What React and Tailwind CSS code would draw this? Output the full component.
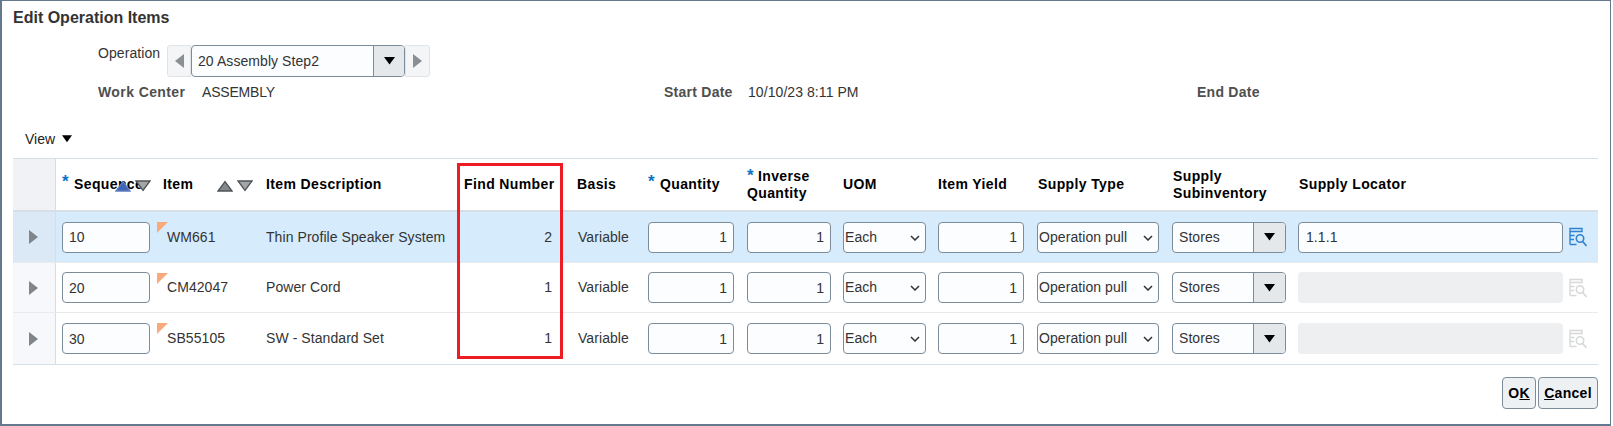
import React from "react";

const COLS = "grid grid-cols-[43px_101px_102px_199px_113px_70px_99px_96px_95px_99px_136px_125px_303px]";

function Star({ className = "" }) {
  return <span className={"text-[#0b72c4] font-bold text-[17px] leading-none " + className}>*</span>;
}

function Tri({ dir = "down", className = "", color = "#000000" }) {
  const side = dir === "left" || dir === "right";
  const pts = { down: "0,0 11,0 5.5,7.5", up: "0,7.5 11,7.5 5.5,0", left: "9,0 9,14 0,7", right: "0,0 9,7 0,14" }[dir];
  const w = side ? 9 : 11;
  const h = side ? 14 : 8;
  return (
    <svg width={w} height={h} viewBox={`0 0 ${w} ${h}`} className={"block " + className}>
      <polygon points={pts} fill={color} />
    </svg>
  );
}

function Sort({ up = "#85888b", upStroke = "#505356", className = "" }) {
  return (
    <div className={"flex gap-[4px] " + className}>
      <svg width="16" height="12" viewBox="0 0 16 12"><polygon points="1,11 15,11 8,1.5" fill={up} stroke={upStroke} strokeWidth="1.3" /></svg>
      <svg width="16" height="12" viewBox="0 0 16 12"><polygon points="1,1 15,1 8,10.5" fill="#a3a6a9" stroke="#505356" strokeWidth="1.3" /></svg>
    </div>
  );
}

function Lookup({ disabled }) {
  const c = disabled ? "#d6d8d9" : "#2f82cf";
  return (
    <svg width="18" height="20" viewBox="0 0 18 20" fill="none" stroke={c} strokeWidth="1.4">
      <path d="M1 1.5H13V4.5H1ZM1 4.5V17.5M1 8.5H5.5M1 12.5H5M1 17.5H7.5" />
      <circle cx="11" cy="11.5" r="3.7" strokeWidth="1.6" />
      <path d="M13.7 14.5L17.5 19" strokeWidth="1.6" />
    </svg>
  );
}

const inputCls = "h-[31px] bg-[#fbfdff] border border-[#7d8c99] rounded-[4px] text-[14px] tracking-[0.07px] text-[#333333] outline-none";

function NumInput({ value, w }) {
  return <input readOnly defaultValue={value} className={inputCls + " text-right pr-[6px] " + w} />;
}

function Combo({ value }) {
  return (
    <div className="flex w-[114px] h-[31px] bg-[#fbfdff] border border-[#7d8c99] rounded-[4px] overflow-hidden">
      <div className="flex-1 pl-[6px] flex items-center text-[14px] text-[#333333]">{value}</div>
      <div className="w-[32px] border-l border-[#7d8c99] bg-[#e4e8ea] flex items-center justify-center"><Tri dir="down" /></div>
    </div>
  );
}

function Sel({ value, w }) {
  return (
    <div className={"relative " + w}>
      <select defaultValue={value} className="block w-full h-[31px] appearance-none pl-[1px] pr-[20px] bg-[#fbfdff] border border-[#7d8c99] rounded-[4px] text-[14px] text-[#333333] outline-none">
        <option>{value}</option>
      </select>
      <svg width="10" height="6" viewBox="0 0 10 6" fill="none" stroke="#333333" strokeWidth="1.5" className="absolute right-[6px] top-[13px] pointer-events-none">
        <path d="M1 1L5 5L9 1" />
      </svg>
    </div>
  );
}

function Row({ seq, item, desc, find, locator, selected, h, last }) {
  const bg = selected ? "bg-[#d6ebfc]" : "bg-white";
  return (
    <div className={`${COLS} ${h} items-center text-[14px] tracking-[0.07px] text-[#333333] ${bg} ${last ? "" : "border-b border-[#e8ebee]"}`}>
      <div className={`h-full flex items-center justify-center border-r border-[#d6dfe6] pr-[1px] ${selected ? "bg-[#dbe8f5]" : "bg-[#f6f8fb]"}`}>
        <Tri dir="right" color="#7f8589" />
      </div>
      <div className="pl-[6px]"><input readOnly defaultValue={seq} className={inputCls + " w-[88px] pl-[6px]"} /></div>
      <div className="relative h-full flex items-center pl-[10px]">
        <svg width="11" height="11" viewBox="0 0 11 11" className="absolute left-0 top-[10px]"><polygon points="0,0 11,0 0,11" fill="#f9a97b" /></svg>
        {item}
      </div>
      <div className="pl-[7px] whitespace-nowrap">{desc}</div>
      <div className="text-right pr-[19px]">{find}</div>
      <div className="pl-[7px]">Variable</div>
      <div className="pl-[7px]"><NumInput value="1" w="w-[86px]" /></div>
      <div className="pl-[7px]"><NumInput value="1" w="w-[84px]" /></div>
      <div className="pl-[7px]"><Sel value="Each" w="w-[83px]" /></div>
      <div className="pl-[7px]"><NumInput value="1" w="w-[86px]" /></div>
      <div className="pl-[7px]"><Sel value="Operation pull" w="w-[122px]" /></div>
      <div className="pl-[6px]"><Combo value="Stores" /></div>
      <div className="pl-[7px] flex items-center gap-[6px]">
        {locator ? (
          <input readOnly defaultValue={locator} className={inputCls + " w-[265px] pl-[7px]"} />
        ) : (
          <div className="w-[265px] h-[31px] bg-[#eeeff0] rounded-[4px]" />
        )}
        <Lookup disabled={!locator} />
      </div>
    </div>
  );
}

export default function App() {
  return (
    <div className="w-[1611px] h-[426px] bg-white border-t border-l-2 border-r border-b-2 border-[#64798d] font-['Liberation_Sans',Arial,sans-serif] overflow-hidden">
      <div className="h-[32px] pl-[11px] pt-[1px] flex items-center text-[16px] font-bold text-[#333333]">Edit Operation Items</div>

      <div className="mt-[12px] h-[32px] pl-[96px] flex text-[14px] tracking-[0.07px] text-[#333333]">
        <div className="w-[69px] -mt-[2px]">Operation</div>
        <div className="w-[24px] bg-[#f3f5f7] border border-[#e0e4e8] rounded-l-[3px] flex items-center justify-center"><Tri dir="left" color="#8a8f93" /></div>
        <div className="w-[214px] bg-[#fbfdff] border border-[#7d8c99] rounded-[4px] flex overflow-hidden">
          <div className="flex-1 flex items-center pl-[6px] text-[14px]">20 Assembly Step2</div>
          <div className="w-[31px] bg-[#e4e8ea] border-l border-[#7d8c99] flex items-center justify-center"><Tri dir="down" /></div>
        </div>
        <div className="w-[25px] bg-[#f3f5f7] border border-[#e0e4e8] rounded-r-[3px] flex items-center justify-center"><Tri dir="right" color="#8a8f93" /></div>
      </div>

      <div className="mt-[3px] h-[24px] pl-[96px] grid grid-cols-[566px_533px_200px] items-center text-[14px] text-[#333333]">
        <div className="flex"><span className="w-[104px] font-bold tracking-[0.4px] text-[#4f4f4f]">Work Center</span><span className="tracking-[-0.2px]">ASSEMBLY</span></div>
        <div className="flex"><span className="w-[84px] font-bold tracking-[0.25px] text-[#4f4f4f]">Start Date</span><span className="tracking-[0.07px]">10/10/23 8:11 PM</span></div>
        <div className="font-bold tracking-[0.25px] text-[#4f4f4f]">End Date</div>
      </div>

      <div className="mt-[25px] h-[20px] pl-[23px] flex items-center gap-[7px] text-[14px] text-[#222222]">
        <span>View</span><Tri dir="down" className="w-[10px]" />
      </div>

      <div className="mt-[9px] ml-[11px] w-[1585px] border-t border-b border-[#d6dfe6] relative">
        <div className={`${COLS} h-[53px] items-center text-[14px] tracking-[0.38px] font-bold text-black leading-[17px] border-b-2 border-[#d6dfe6]`}>
          <div className="h-full bg-[#f0f2f6] border-r border-[#d6dfe6]" />
          <div className="relative h-full flex items-center pl-[6px] overflow-hidden">
            <Star className="relative -top-[3px]" />
            <span className="ml-[5px] whitespace-nowrap">Sequence</span>
            <Sort up="#3f63b5" upStroke="#5e7cc0" className="absolute left-[59px] top-[21px]" />
          </div>
          <div className="relative h-full flex items-center pl-[6px]">Item<Sort className="absolute left-[60px] top-[21px]" /></div>
          <div className="pl-[7px]">Item Description</div>
          <div className="pl-[6px] whitespace-nowrap">Find Number</div>
          <div className="pl-[6px]">Basis</div>
          <div className="pl-[7px] flex items-center"><Star className="relative -top-[3px] mr-[5px]" />Quantity</div>
          <div className="pl-[7px]"><Star className="mr-[4px]" />Inverse<br />Quantity</div>
          <div className="pl-[7px]">UOM</div>
          <div className="pl-[7px]">Item Yield</div>
          <div className="pl-[8px]">Supply Type</div>
          <div className="pl-[7px]">Supply<br />Subinventory</div>
          <div className="pl-[8px]">Supply Locator</div>
        </div>
        <Row seq="10" item="WM661" desc="Thin Profile Speaker System" find="2" locator="1.1.1" h="h-[51px]" selected />
        <Row seq="20" item="CM42047" desc="Power Cord" find="1" h="h-[50px]" />
        <Row seq="30" item="SB55105" desc="SW - Standard Set" find="1" h="h-[51px]" last />
        <div className="absolute left-[444px] top-[4px] w-[106px] h-[196px] border-[3px] border-[#ed1c24]" />
      </div>

      <div className="mt-[12px] mr-[12px] flex justify-end gap-[2px] text-[14px] tracking-[0.3px] font-bold text-black">
        <button className="h-[32px] w-[34px] rounded-[4px] border border-[#7d8c99] bg-[#eef1f4]">O<u>K</u></button>
        <button className="h-[32px] w-[60px] rounded-[4px] border border-[#7d8c99] bg-[#eef1f4]"><u>C</u>ancel</button>
      </div>
    </div>
  );
}
